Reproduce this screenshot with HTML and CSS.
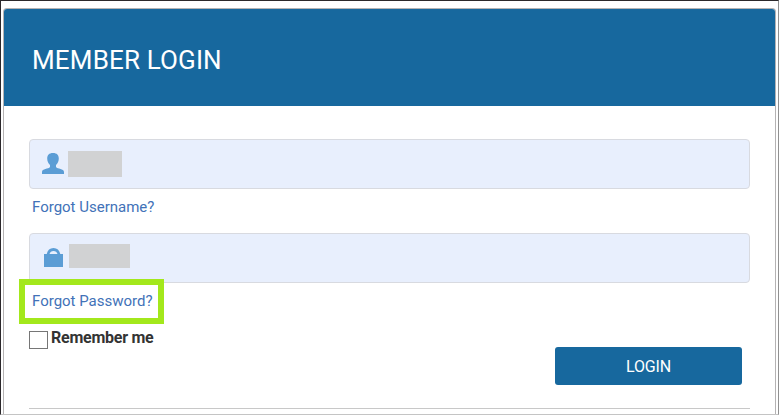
FILE: index.html
```html
<!DOCTYPE html>
<html lang="en">
<head>
    <meta charset="UTF-8">
    <meta name="viewport" content="width=device-width, initial-scale=1.0">
    <title>Member Login</title>
    <link rel="stylesheet" href="styles.css">
</head>
<body>
    <div class="login-panel">
        <header>
            <h1>MEMBER LOGIN</h1>
        </header>

        <form class="login-form">
            <div class="field">
                <svg class="user-icon" width="22" height="21" viewBox="0 0 22 21">
                    <path d="M11 0C7 0 5.200 2.200 5.200 5.500C5.200 8.500 6.400 10.500 8 12V14C6.500 16 0 15.500 0 19V21H22V19C22 15.500 15.500 16 14 14V12C15.600 10.500 16.800 8.500 16.800 5.500C16.800 2.200 15 0 11 0Z"/>
                </svg>
                <span class="mask"></span>
            </div>
            <a class="forgot" href="#">Forgot Username?</a>

            <div class="field password">
                <svg class="lock-icon" width="19" height="19" viewBox="0 0 19 19">
                    <path d="M0 6H2.700C3.600 2 5.800 0 9.500 0C13.200 0 15.400 2 16.300 6H19V19H0ZM5.500 6H13.500C12.900 4 11.600 3 9.500 3C7.400 3 6.100 4 5.500 6Z" fill-rule="evenodd"/>
                </svg>
                <span class="mask"></span>
            </div>
            <a class="forgot highlight" href="#">Forgot Password?</a>

            <div class="actions">
                <label class="remember">
                    <input type="checkbox">
                    <span>Remember me</span>
                </label>
                <button type="button" class="login-btn">LOGIN</button>
            </div>
            <hr>
        </form>
    </div>
</body>
</html>
```
FILE: styles.css
```css
* {
    box-sizing: border-box;
}
body {
    margin: 0;
    height: 415px;
    padding: 7px 2px 0;
    overflow: hidden;
    font-family: Roboto, sans-serif;
    background-color: #fff;
    border: 1px solid #2b282b;
    border-right-color: #919191;
    border-bottom-color: #c4c4c4;
}
.login-panel {
    height: 406px;
    border: 1px solid #b5b3b4;
    border-bottom: none;
    border-radius: 4px 4px 0 0;
    overflow: hidden;
}
header {
    height: 97px;
    padding: 0 28px;
    display: flex;
    align-items: center;
    background-color: #17689e;
    color: white;
}
h1 {
    margin: 5px 0 0;
    font-size: 26px;
    line-height: 32px;
    font-weight: 400;
    letter-spacing: 0.15px;
}
.login-form {
    padding: 33px 25px 0;
}
.field {
    height: 50px;
    padding: 11px 12px 0;
    display: flex;
    background-color: #e8effd;
    border: 1px solid #d8dae0;
    border-radius: 4px;
}
.user-icon, .lock-icon {
    fill: #5b9dd5;
}
.user-icon {
    margin-top: 2px;
}
.mask {
    width: 54px;
    height: 26px;
    margin-left: 4px;
    background-color: #d1d2d3;
}
.password {
    padding: 10px 14px 0;
}
.lock-icon {
    margin-top: 4px;
}
.password .mask {
    width: 61px;
    height: 24px;
    margin-left: 6px;
}
.forgot {
    display: block;
    width: fit-content;
    height: 44px;
    padding: 8px 3px 0;
    font-size: 15px;
    line-height: 20px;
    color: #4272b8;
    text-decoration: none;
    white-space: nowrap;
}
.highlight {
    position: relative;
    width: 145px;
    height: 45px;
    margin: -4px 0 0 -10px;
    padding: 6px 7px 0;
    background-color: #fff;
    border: 6px solid #a3e81c;
}
.actions {
    height: 84px;
    padding-right: 8px;
    display: flex;
    justify-content: space-between;
}
.remember {
    display: flex;
    height: 25px;
    padding-top: 7px;
    color: #333;
    font-size: 16px;
    font-weight: 700;
    line-height: 14px;
    letter-spacing: -0.25px;
}
.remember input {
    appearance: none;
    width: 19px;
    height: 18px;
    margin: 0 3px 0 0;
    border: 1px solid #767676;
}
.login-btn {
    width: 187px;
    height: 38px;
    margin-top: 23px;
    padding: 0;
    background-color: #17689e;
    color: white;
    border: none;
    border-radius: 3px;
    font-family: Roboto, sans-serif;
    font-size: 16px;
    letter-spacing: -0.2px;
    cursor: pointer;
}
hr {
    height: 1px;
    margin: 0;
    border: none;
    background-color: #c8c8c8;
}
```
